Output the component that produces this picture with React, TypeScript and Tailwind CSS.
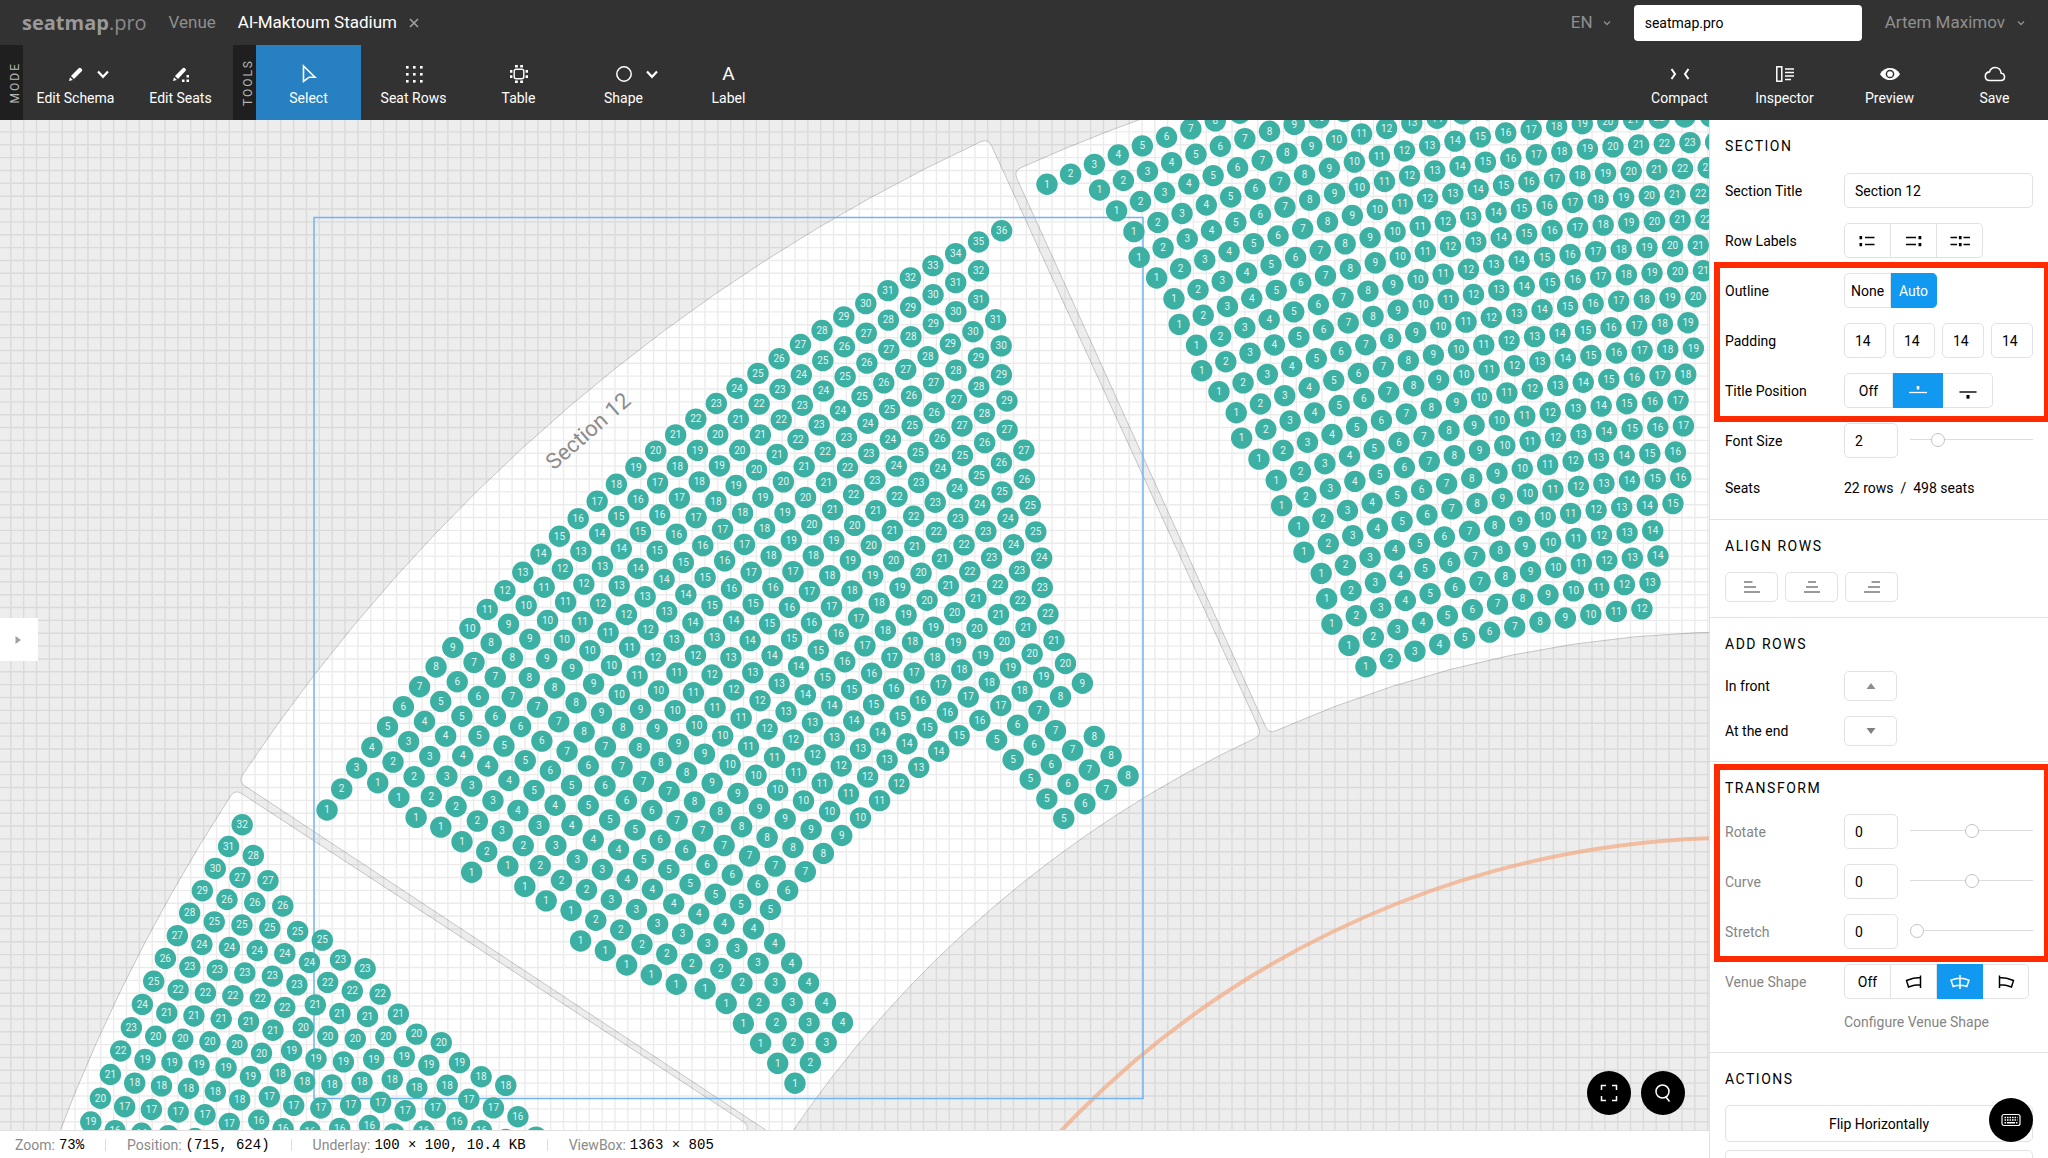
import { useState, type ReactNode } from "react";

/* ------------------------------------------------------------------ */
/* Seat map geometry: every row is an arc round one shared centre.     */
/* ------------------------------------------------------------------ */

const CX = 1742.6;
const CY = 1656.1;
const PITCH = 25.71;

type Row = { at: [number, number]; first: number; last: number; seat?: number };

const range = (n: number) => Array.from({ length: n }, (_, i) => i);

function arcSeats(outer: number, index: number, row: Row) {
  const r = outer - PITCH * index;
  const step = 25.7 / r;
  const start = Math.atan2(CY - row.at[1], CX - row.at[0]);
  const anchor = row.seat ?? row.first;
  return range(row.last - row.first + 1).map((i) => {
    const n = row.first + i;
    const a = start + (n - anchor) * step;
    return { n, x: CX - r * Math.cos(a), y: CY - r * Math.sin(a) };
  });
}

const SECTION_12: Row[][] = [
  [{ at: [327, 690], first: 1, last: 36 }],
  [{ at: [377.7, 662.7], first: 1, last: 32 }],
  [{ at: [398.7, 677.3], first: 1, last: 31 }],
  [{ at: [416, 697.3], first: 1, last: 31 }],
  [{ at: [441, 707.3], first: 1, last: 30 }],
  [{ at: [462, 721.7], first: 1, last: 29 }],
  [{ at: [471.7, 752.3], first: 1, last: 29 }],
  [{ at: [508, 746.3], first: 1, last: 27 }],
  [{ at: [525.3, 766.7], first: 1, last: 27 }],
  [{ at: [546, 780.7], first: 1, last: 26 }],
  [{ at: [571, 790.3], first: 1, last: 25 }],
  [{ at: [580.7, 821], first: 1, last: 25 }],
  [{ at: [605.7, 830.7], first: 1, last: 24 }],
  [{ at: [626.7, 845], first: 1, last: 23 }],
  [{ at: [651.3, 854.7], first: 1, last: 22 }],
  [{ at: [676.3, 864.3], first: 1, last: 21 }],
  [{ at: [705, 868.7], first: 1, last: 20 }],
  [
    { at: [726, 883.3], first: 1, last: 4 },
    { at: [996.7, 620], first: 5, last: 9 },
  ],
  [
    { at: [743.3, 903.3], first: 1, last: 4 },
    { at: [1013.3, 640], first: 5, last: 7 },
  ],
  [
    { at: [760.7, 923.3], first: 1, last: 4 },
    { at: [1030.3, 659.3], first: 5, last: 8 },
  ],
  [
    { at: [777.7, 943.3], first: 1, last: 4 },
    { at: [1047, 679], first: 5, last: 8 },
  ],
  [
    { at: [795, 963.3], first: 1, last: 4 },
    { at: [1064, 698.7], first: 5, last: 8 },
  ],
];

const SECTION_RIGHT: Row[][] = [
  [{ at: [1047, 64.3], first: 1, last: 27 }],
  [{ at: [1099.7, 70.4], first: 1, last: 27 }],
  [{ at: [1116.7, 91.1], first: 1, last: 26 }],
  [{ at: [1134, 111.8], first: 1, last: 25 }],
  [{ at: [1139.3, 137.5], first: 1, last: 24 }],
  [{ at: [1156.7, 158.2], first: 1, last: 24 }],
  [{ at: [1174, 178.9], first: 1, last: 23 }],
  [{ at: [1179.3, 204.6], first: 1, last: 22 }],
  [{ at: [1196.7, 225.7], first: 1, last: 21 }],
  [{ at: [1201.7, 250.7], first: 1, last: 21 }],
  [{ at: [1219, 271.8], first: 1, last: 20 }],
  [{ at: [1236.3, 292.9], first: 1, last: 19 }],
  [{ at: [1241.7, 318.2], first: 1, last: 19 }],
  [{ at: [1259, 339.3], first: 1, last: 18 }],
  [{ at: [1276.3, 360.4], first: 1, last: 17 }],
  [{ at: [1281.7, 385.7], first: 1, last: 17 }],
  [{ at: [1298.7, 406.8], first: 1, last: 16 }],
  [{ at: [1304, 432.1], first: 1, last: 16 }],
  [{ at: [1321.3, 453.6], first: 1, last: 15 }],
  [{ at: [1326.7, 478.9], first: 1, last: 14 }],
  [{ at: [1332, 504.3], first: 1, last: 14 }],
  [{ at: [1349, 525.4], first: 1, last: 13 }],
  [{ at: [1366, 547], first: 1, last: 12 }],
];

/* Anchored on the topmost seat; numbers fall towards the lower left. */
const top = (x: number, y: number, n: number): Row[] => [
  { at: [x, y], first: n - 18, last: n, seat: n },
];
const SECTION_LEFT: Row[][] = [
  top(242.1, 704.7, 32),
  top(253.2, 735.3, 28),
  top(267.9, 760.7, 27),
  top(282.9, 786, 26),
  top(297.5, 811.3, 25),
  top(322.1, 820, 25),
  top(340.4, 840, 23),
  top(365, 848.7, 23),
  top(380, 874, 22),
  top(398.2, 894, 21),
  top(416.4, 914, 20),
  top(441.4, 922.7, 20),
  top(459.6, 942.7, 19),
  top(481.1, 956.7, 18),
  top(505.7, 965.3, 18),
  top(517.9, 996.7, 16),
  top(536, 1017, 15),
];

const SEATS = [
  ...SECTION_12.flatMap((segs, i) => segs.flatMap((s) => arcSeats(1713.8, i, s))),
  ...SECTION_RIGHT.flatMap((segs, i) => segs.flatMap((s) => arcSeats(1737.2, i, s))),
  ...SECTION_LEFT.flatMap((segs, i) => segs.flatMap((s) => arcSeats(1776.6, i, s))),
].filter((s) => s.y > -11 && s.y < 1200 && s.x < 2600);

const GRID = 12.855;
const GRID_PATH =
  range(200).map((i) => `M${(10.8 + i * GRID).toFixed(2)} 0V1600`).join("") +
  range(120).map((i) => `M0 ${(11.9 + (i - 1) * GRID).toFixed(2)}H2600`).join("");

function SeatCanvas() {
  return (
    <svg className="absolute inset-0 size-full" role="img" aria-label="Seat map">
      <rect width="100%" height="100%" fill="#ededed" />
      <g transform="translate(0 -120)" fill="#fff" stroke="#c6c6c6" strokeWidth="1">
        <path d="M245 786L785 1142.7A1148 1148 0 0 1 1254.7 738.4Q1262 735 1258.7 727.7L991.6 145.8Q988.3 138.5 980.9 141.6A1803.6 1803.6 0 0 0 242.5 774.8Q238 781.5 245 786Z" />
        <path d="M1016.8 178.3Q1013.5 171 1020.8 167.7A1763 1763 0 0 1 1760 13.2L1760 632A1145 1145 0 0 0 1276.1 730.7Q1268.8 734 1265.5 726.7Z" />
        <path d="M241.7 793.6Q235 789.2 230.6 795.9A1802 1802 0 0 0 35 1200L705.9 1200A1186 1186 0 0 1 745.6 1132.7Q750 1126 743.3 1121.6Z" />
      </g>
      <path d={GRID_PATH} stroke="#000" strokeOpacity="0.08" strokeWidth="1.4" fill="none" />
      <circle cx={CX} cy={CY} r="938.500" fill="none" stroke="#f5a47a" strokeOpacity="0.65" strokeWidth="4" />
      <rect x="314" y="97.5" width="829" height="881" fill="none" stroke="#6fb4f3" strokeWidth="1.5" />
      <text
        transform="translate(588 311) rotate(-41)"
        textAnchor="middle"
        dominantBaseline="central"
        fontSize="22"
        fill="#8c8c8c"
      >
        Section 12
      </text>
      <g fill="#3bb0a3">
        {SEATS.map((s, i) => (
          <circle key={i} cx={s.x} cy={s.y} r="10.7" />
        ))}
      </g>
      <g fill="#e6f5f3" fontSize="10" textAnchor="middle">
        {SEATS.map((s, i) => (
          <text key={i} x={s.x} y={s.y + 3.3}>
            {s.n}
          </text>
        ))}
      </g>
    </svg>
  );
}

/* ------------------------------------------------------------------ */
/* Icons                                                               */
/* ------------------------------------------------------------------ */

function Svg({ w = 24, h = 24, children }: { w?: number; h?: number; children: ReactNode }) {
  return (
    <svg width={w} height={h} viewBox={`0 0 ${w} ${h}`} fill="none" stroke="currentColor" strokeWidth="1.5" aria-hidden="true">
      {children}
    </svg>
  );
}

const Chevron = () => (
  <Svg w={14} h={14}>
    <path d="M2 4.5L7 9.8L12 4.5" strokeWidth="2.2" />
  </Svg>
);
const SmallChevron = () => (
  <Svg w={8} h={8}>
    <path d="M1 2.5L4 5.5L7 2.5" strokeWidth="1.3" />
  </Svg>
);
const Pencil = () => (
  <Svg w={16} h={16}>
    <path d="M1 15L2 11.2L4.8 14Z" fill="currentColor" stroke="none" />
    <path d="M3 10L10.7 2.3C11.4 1.6 12.3 1.6 13 2.3L13.7 3C14.4 3.7 14.4 4.6 13.7 5.3L6 13Z" fill="currentColor" stroke="none" />
  </Svg>
);
const PencilSeats = () => (
  <Svg w={18} h={18}>
    <path d="M1 16L2 12.2L4.8 15Z" fill="currentColor" stroke="none" />
    <path d="M3 11L10.7 3.3C11.4 2.6 12.3 2.6 13 3.3L13.4 3.7C14.1 4.4 14.1 5.3 13.4 6L6 14Z" fill="currentColor" stroke="none" />
    <path d="M14.5 10h2.5v2.5h-2.5zM14.5 14.5h2.5V17h-2.5zM10 14.5h2.5V17H10z" fill="currentColor" stroke="none" />
  </Svg>
);
const Cursor = () => (
  <Svg w={18} h={20}>
    <path d="M3.5 2L15 13.2L9.2 13.2L3.5 17.5Z" strokeWidth="1.6" />
  </Svg>
);
const Dots = () => (
  <Svg w={18} h={18}>
    <g fill="currentColor" stroke="none">
      {[1, 8, 15].map((y) => [1, 8, 15].map((x) => <rect key={`${x}-${y}`} x={x} y={y} width="2.6" height="2.6" />))}
    </g>
  </Svg>
);
const TableIcon = () => (
  <Svg w={20} h={20}>
    <rect x="5.2" y="5.2" width="9.6" height="9.6" rx="2" strokeWidth="1.4" />
    <path
      d="M6 1h2.8v2.4H6zM11.2 1H14v2.4h-2.8zM6 16.6h2.8V19H6zM11.2 16.6H14V19h-2.8zM1 6h2.4v2.8H1zM1 11.2h2.4V14H1zM16.6 6H19v2.8h-2.4zM16.6 11.2H19V14h-2.4z"
      fill="currentColor"
      stroke="none"
    />
  </Svg>
);
const Circle = () => (
  <Svg w={18} h={18}>
    <circle cx="9" cy="9" r="7.2" strokeWidth="1.5" />
  </Svg>
);
const LetterA = () => <span className="text-[19px] leading-5">A</span>;
const CompactIcon = () => (
  <Svg w={20} h={14}>
    <path d="M1.5 2L5 7L1.5 12M18.5 2L15 7L18.5 12" strokeWidth="2" />
  </Svg>
);
const InspectorIcon = () => (
  <Svg w={20} h={18}>
    <rect x="1.8" y="1.8" width="5" height="14.4" />
    <path d="M10 4h9M10 7.5h9M10 11h9M10 14.5h6" strokeWidth="1.3" />
  </Svg>
);
const Eye = () => (
  <Svg w={22} h={16}>
    <path d="M1 8C3.5 3.8 7 2 11 2S18.5 3.8 21 8C18.5 12.2 15 14 11 14S3.5 12.2 1 8Z" fill="currentColor" stroke="none" />
    <circle cx="11" cy="8" r="3.6" stroke="#323232" strokeWidth="1.5" />
  </Svg>
);
const Cloud = () => (
  <Svg w={22} h={18}>
    <path d="M5.5 15.5H16.8C19 15.5 20.5 14 20.5 12C20.5 10 19.2 8.5 17.2 8.3C16.8 5 14.5 2.5 11.2 2.5C8.4 2.5 6.3 4.2 5.4 6.9C3 7.3 1.3 9 1.3 11.3C1.3 13.7 3 15.5 5.5 15.5Z" strokeWidth="1.6" />
  </Svg>
);
const LabelsLeft = () => (
  <Svg w={20} h={14}>
    <path d="M7 3.5h9.5M7 10.5h9.5" strokeWidth="1.5" />
    <path d="M1.5 2h2.6v3.2H1.5zM1.5 9h2.6v3.2H1.5z" fill="currentColor" stroke="none" />
  </Svg>
);
const LabelsRight = () => (
  <Svg w={20} h={14}>
    <path d="M2 3.5h10M2 10.5h10" strokeWidth="1.5" />
    <path d="M14.5 2h2.8v3.2h-2.8zM14.5 9h2.8v3.2h-2.8z" fill="currentColor" stroke="none" />
  </Svg>
);
const LabelsBoth = () => (
  <Svg w={22} h={14}>
    <path d="M1.5 3.5H8M1.5 10.5H8M14.5 3.5H21M14.5 10.5H21" strokeWidth="1.5" />
    <path d="M9.9 2h2.7v3.2H9.9zM9.9 9h2.7v3.2H9.9z" fill="currentColor" stroke="none" />
  </Svg>
);
const TitleAbove = () => (
  <Svg w={20} h={16}>
    <path d="M1 9.5h18" strokeWidth="1.3" />
    <path d="M8.7 3h2.6v3.5H8.7z" fill="currentColor" stroke="none" />
  </Svg>
);
const TitleBelow = () => (
  <Svg w={20} h={16}>
    <path d="M1.5 9h17" strokeWidth="1.4" />
    <path d="M8.5 12h3v3.7h-3z" fill="currentColor" stroke="none" />
  </Svg>
);
const AlignIcon = ({ d }: { d: string }) => (
  <Svg w={18} h={16}>
    <path d={d} stroke="#9a9a9a" strokeWidth="1.8" />
  </Svg>
);
const ShapeLeft = () => (
  <Svg w={20} h={16}>
    <path d="M16.5 1.5V14M16.5 3.5C11.5 3.5 7 4.5 2.5 6.5L4.5 13C8 11.5 12 10.7 16.5 10.7" />
  </Svg>
);
const ShapeMid = () => (
  <Svg w={22} h={16}>
    <path d="M11 1V15M2 6.2C8 3.6 14 3.6 20 6.2L17.8 12.5C13.3 10.8 8.7 10.8 4.2 12.5Z" />
  </Svg>
);
const ShapeRight = () => (
  <Svg w={20} h={16}>
    <path d="M3.5 1.5V14M3.5 3.5C8.5 3.5 13 4.5 17.5 6.5L15.5 13C12 11.5 8 10.7 3.5 10.7" />
  </Svg>
);

/* ------------------------------------------------------------------ */
/* Header                                                              */
/* ------------------------------------------------------------------ */

function Tool({
  label,
  children,
  active,
  menu,
}: {
  label: string;
  children: ReactNode;
  active?: boolean;
  menu?: boolean;
}) {
  return (
    <button
      type="button"
      className={`flex h-full w-[105px] flex-col items-center pt-[19px] text-sm text-white ${active ? "bg-[#2680c2]" : ""}`}
    >
      <span className="flex h-5 items-center gap-3">
        {menu && <span className="w-3.5" />}
        {children}
        {menu && <Chevron />}
      </span>
      <span className="mt-1 leading-5">{label}</span>
    </button>
  );
}

function GroupLabel({ children }: { children: string }) {
  return (
    <div className="flex h-full w-[23px] items-center justify-center bg-[#1f1f1f] pl-1.5 text-xs tracking-[2px] text-[#b5b5b5]">
      <span className="rotate-180 [writing-mode:vertical-rl]">{children}</span>
    </div>
  );
}

function Header() {
  return (
    <header className="shrink-0 bg-[#323232]">
      <div className="flex h-[45px] items-center text-[17px]">
        <a href="#home" className="ml-[22px] font-['Open_Sans',sans-serif] text-xl leading-none text-[#999]">
          <b>seatmap</b>
          <span className="text-[#8a8a8a]">.pro</span>
        </a>
        <a href="#venue" className="ml-[22px] text-[#8f8f8f]">
          Venue
        </a>
        <span className="ml-[22px] text-white">Al-Maktoum Stadium</span>
        <button type="button" aria-label="Close venue" className="ml-3 text-[#a5a5a5]">
          <Svg w={10} h={10}>
            <path d="M1 1L9 9M9 1L1 9" />
          </Svg>
        </button>
        <div className="ml-auto flex items-center">
          <button type="button" className="flex items-center gap-2.5 text-[#8f8f8f]">
            EN
            <SmallChevron />
          </button>
          <input
            aria-label="Organization"
            defaultValue="seatmap.pro"
            className="ml-[23px] h-9 w-[228px] rounded bg-white px-[11px] text-sm text-black outline-none"
          />
          <button type="button" className="mx-[23px] flex items-center gap-3 text-[#8f8f8f]">
            Artem Maximov
            <SmallChevron />
          </button>
        </div>
      </div>
      <div className="flex h-[75px]">
        <GroupLabel>MODE</GroupLabel>
        <Tool label="Edit Schema" menu>
          <Pencil />
        </Tool>
        <Tool label="Edit Seats">
          <PencilSeats />
        </Tool>
        <GroupLabel>TOOLS</GroupLabel>
        <Tool label="Select" active>
          <Cursor />
        </Tool>
        <Tool label="Seat Rows">
          <Dots />
        </Tool>
        <Tool label="Table">
          <TableIcon />
        </Tool>
        <Tool label="Shape" menu>
          <Circle />
        </Tool>
        <Tool label="Label">
          <LetterA />
        </Tool>
        <div className="mr-px ml-auto flex">
          <Tool label="Compact">
            <CompactIcon />
          </Tool>
          <Tool label="Inspector">
            <InspectorIcon />
          </Tool>
          <Tool label="Preview">
            <Eye />
          </Tool>
          <Tool label="Save">
            <Cloud />
          </Tool>
        </div>
      </div>
    </header>
  );
}

/* ------------------------------------------------------------------ */
/* Inspector panel                                                     */
/* ------------------------------------------------------------------ */

const field = "h-[35px] rounded-[5px] border border-[#e2e2e2] bg-white px-2.5 text-sm text-black outline-none";

function Panel({ title, children, last }: { title: string; children: ReactNode; last?: boolean }) {
  return (
    <section className={`pt-4 pr-[15px] pl-[15px] ${last ? "" : "border-b border-[#e2e2e2]"}`}>
      <h2 className="text-sm leading-5 tracking-[1.5px] text-black">{title}</h2>
      {children}
    </section>
  );
}

function FieldRow({
  label,
  htmlFor,
  muted,
  children,
}: {
  label: string;
  htmlFor?: string;
  muted?: boolean;
  children: ReactNode;
}) {
  const tone = muted ? "text-[#858585]" : "text-black";
  return (
    <div className="grid grid-cols-[119px_minmax(0,1fr)] items-center">
      {htmlFor ? (
        <label htmlFor={htmlFor} className={tone}>
          {label}
        </label>
      ) : (
        <span className={tone}>{label}</span>
      )}
      <div className="flex items-center">{children}</div>
    </div>
  );
}

function Segmented({
  name,
  items,
  active,
  width,
}: {
  name: string;
  items: { label: string; icon?: ReactNode }[];
  active?: number;
  width: string;
}) {
  const [current, setCurrent] = useState(active);
  return (
    <div role="group" aria-label={name} className="flex h-[35px]">
      {items.map((it, i) => (
        <button
          key={it.label}
          type="button"
          aria-label={it.label}
          aria-pressed={i === current}
          onClick={() => setCurrent(i)}
          className={`flex items-center justify-center border-y border-r first:rounded-l-[5px] first:border-l last:rounded-r-[5px] ${width} ${
            i === current ? "border-[#1198f0] bg-[#1198f0] text-white" : "border-[#e2e2e2] bg-white text-black"
          }`}
        >
          {it.icon ?? it.label}
        </button>
      ))}
    </div>
  );
}

function SliderRow({
  id,
  label,
  value,
  position,
  muted,
}: {
  id: string;
  label: string;
  value: string;
  position: number;
  muted?: boolean;
}) {
  return (
    <FieldRow label={label} htmlFor={id} muted={muted}>
      <input id={id} defaultValue={value} className={`${field} w-[54px] shrink-0`} />
      <input
        type="range"
        aria-label={`${label} slider`}
        defaultValue={position}
        className="mb-0.5 ml-3 h-[15px] w-full min-w-0 flex-1 appearance-none bg-[linear-gradient(#dcdcdc,#dcdcdc)] bg-[length:100%_1px] bg-center bg-no-repeat outline-none [&::-webkit-slider-thumb]:size-[14px] [&::-webkit-slider-thumb]:appearance-none [&::-webkit-slider-thumb]:rounded-full [&::-webkit-slider-thumb]:border [&::-webkit-slider-thumb]:border-[#c2c2c2] [&::-webkit-slider-thumb]:bg-white"
      />
    </FieldRow>
  );
}

function Highlight({ className }: { className: string }) {
  return <div className={`pointer-events-none absolute border-[6px] border-[#ff2a00] ${className}`} />;
}

const smallButton = "flex h-[30px] w-[53px] items-center justify-center rounded-[5px] border border-[#e2e2e2] bg-white";

function Inspector() {
  return (
    <aside className="relative w-[339px] shrink-0 overflow-hidden border-l border-[#e0e0e0] bg-white text-sm">
      <Panel title="SECTION">
        <div className="mt-[17px] flex flex-col gap-[15px] pb-4">
          <FieldRow label="Section Title" htmlFor="title">
            <input id="title" defaultValue="Section 12" className={`${field} w-full`} />
          </FieldRow>
          <FieldRow label="Row Labels">
            <Segmented
              name="Row Labels"
              width="w-[46px] first:w-[47px]"
              items={[
                { label: "Left", icon: <LabelsLeft /> },
                { label: "Right", icon: <LabelsRight /> },
                { label: "Both", icon: <LabelsBoth /> },
              ]}
            />
          </FieldRow>
          <div className="relative flex flex-col gap-[15px]">
            <FieldRow label="Outline">
              <Segmented
                name="Outline"
                width="w-[46px] first:w-[47px]"
                active={1}
                items={[{ label: "None" }, { label: "Auto" }]}
              />
            </FieldRow>
            <FieldRow label="Padding">
              <div className="grid grid-cols-4 gap-[7px]">
                {["top", "right", "bottom", "left"].map((side) => (
                  <input key={side} aria-label={`Padding ${side}`} defaultValue="14" className={`${field} w-full min-w-0`} />
                ))}
              </div>
            </FieldRow>
            <FieldRow label="Title Position">
              <Segmented
                name="Title Position"
                width="w-[50px] first:w-[49px]"
                active={1}
                items={[
                  { label: "Off" },
                  { label: "Above", icon: <TitleAbove /> },
                  { label: "Below", icon: <TitleBelow /> },
                ]}
              />
            </FieldRow>
            <Highlight className="-top-[11px] -right-[17px] -bottom-3.5 -left-[11px]" />
          </div>
          <SliderRow id="font-size" label="Font Size" value="2" position={19} />
          <FieldRow label="Seats">
            <span className="py-[5px] leading-5 whitespace-pre">22 rows  /  498 seats</span>
          </FieldRow>
        </div>
      </Panel>

      <Panel title="ALIGN ROWS">
        <div className="mt-4 flex gap-[7px] pb-[15px]">
          <button type="button" aria-label="Align left" className={smallButton}>
            <AlignIcon d="M1 3h8.5M1 8h12M1 13h16" />
          </button>
          <button type="button" aria-label="Align center" className={smallButton}>
            <AlignIcon d="M5 3h8M3 8h12M1 13h16" />
          </button>
          <button type="button" aria-label="Align right" className={smallButton}>
            <AlignIcon d="M8.5 3H17M5 8h12M1 13h16" />
          </button>
        </div>
      </Panel>

      <Panel title="ADD ROWS">
        <div className="mt-[17px] flex flex-col gap-[15px] pb-[15px]">
          <FieldRow label="In front">
            <button type="button" aria-label="Add row in front" className={smallButton}>
              <Svg w={10} h={8}>
                <path d="M0.5 7L5 1L9.5 7Z" fill="#8f8f8f" stroke="none" />
              </Svg>
            </button>
          </FieldRow>
          <FieldRow label="At the end">
            <button type="button" aria-label="Add row at the end" className={smallButton}>
              <Svg w={10} h={8}>
                <path d="M0.5 1H9.5L5 7Z" fill="#808080" stroke="none" />
              </Svg>
            </button>
          </FieldRow>
        </div>
      </Panel>

      <div className="relative">
        <Panel title="TRANSFORM">
          <div className="mt-4 flex flex-col gap-[15px] pb-5">
            <SliderRow id="rotate" label="Rotate" value="0" position={50} muted />
            <SliderRow id="curve" label="Curve" value="0" position={50} muted />
            <SliderRow id="stretch" label="Stretch" value="0" position={0} muted />
            <FieldRow label="Venue Shape" muted>
              <Segmented
                name="Venue Shape"
                width="w-[46px] first:w-[47px]"
                active={2}
                items={[
                  { label: "Off" },
                  { label: "Left side", icon: <ShapeLeft /> },
                  { label: "Centered", icon: <ShapeMid /> },
                  { label: "Right side", icon: <ShapeRight /> },
                ]}
              />
            </FieldRow>
            <a href="#venue-shape" className="-mt-0.5 ml-[119px] leading-5 text-[#858585]">
              Configure Venue Shape
            </a>
          </div>
        </Panel>
        <Highlight className="top-0.5 -right-0.5 bottom-[91px] left-1" />
      </div>

      <Panel title="ACTIONS" last>
        <div className="mt-4 flex flex-col gap-2">
          <button type="button" className="h-[37px] rounded-[5px] border border-[#e2e2e2]">
            Flip Horizontally
          </button>
          <button type="button" className="h-[37px] rounded-[5px] border border-[#e2e2e2]">
            Flip Vertically
          </button>
        </div>
      </Panel>

      <button
        type="button"
        aria-label="Keyboard shortcuts"
        className="absolute right-[15px] bottom-4 flex size-11 items-center justify-center rounded-full bg-black text-white"
      >
        <Svg w={20} h={14}>
          <rect x="1" y="1.5" width="18" height="11" rx="2" strokeWidth="1.2" />
          <path d="M3.5 4.5h13M3.5 7h13" strokeWidth="1.5" strokeDasharray="1.6 0.9" />
          <path d="M3.5 9.8h1.6M6 9.8h8M14.9 9.8h1.6" strokeWidth="1.4" />
        </Svg>
      </button>
    </aside>
  );
}

/* ------------------------------------------------------------------ */
/* Status bar                                                          */
/* ------------------------------------------------------------------ */

function StatusBar() {
  const items = [
    ["Zoom:", "73%"],
    ["Position:", "(715, 624)"],
    ["Underlay:", "100 × 100, 10.4 KB"],
    ["ViewBox:", "1363 × 805"],
  ];
  return (
    <footer className="flex h-7 shrink-0 items-center border-t border-[#e0e0e0] bg-white pl-[15px]">
      {items.map(([k, v], i) => (
        <div
          key={k}
          className={`flex items-center gap-1 leading-3 ${i > 0 ? "ml-[21px] border-l border-[#dcdcdc] pl-[21px]" : ""}`}
        >
          <span className="text-sm leading-3 text-[#8a8a8a]">{k}</span>
          <span className="font-['Liberation_Mono',monospace] text-sm leading-3 text-black">{v}</span>
        </div>
      ))}
    </footer>
  );
}

export default function App() {
  return (
    <div className="flex h-screen flex-col overflow-hidden bg-white font-[Roboto,sans-serif]">
      <Header />
      <div className="flex min-h-0 flex-1">
        <div className="flex min-w-0 flex-1 flex-col">
          <main className="relative min-h-0 flex-1 overflow-hidden">
            <SeatCanvas />
            <button
              type="button"
              aria-label="Open side panel"
              className="absolute top-[498px] left-0 flex h-[43px] w-[38px] items-center justify-center bg-white"
            >
              <Svg w={8} h={10}>
                <path d="M0.5 1L6 5L0.5 9Z" fill="#a0a0a0" stroke="none" />
              </Svg>
            </button>
            <div className="absolute right-6 bottom-[15px] flex gap-2.5">
              <button
                type="button"
                aria-label="Fit to screen"
                className="flex size-11 items-center justify-center rounded-full bg-black text-white"
              >
                <Svg w={18} h={18}>
                  <path d="M1.5 6V1.5H6M12 1.5H16.5V6M16.5 12V16.5H12M6 16.5H1.5V12" />
                </Svg>
              </button>
              <button
                type="button"
                aria-label="Zoom"
                className="flex size-11 items-center justify-center rounded-full bg-black text-white"
              >
                <Svg w={18} h={20}>
                  <circle cx="8.5" cy="8.5" r="6.5" />
                  <path d="M11.5 13.5L15.5 18.5" />
                </Svg>
              </button>
            </div>
          </main>
          <StatusBar />
        </div>
        <Inspector />
      </div>
    </div>
  );
}
